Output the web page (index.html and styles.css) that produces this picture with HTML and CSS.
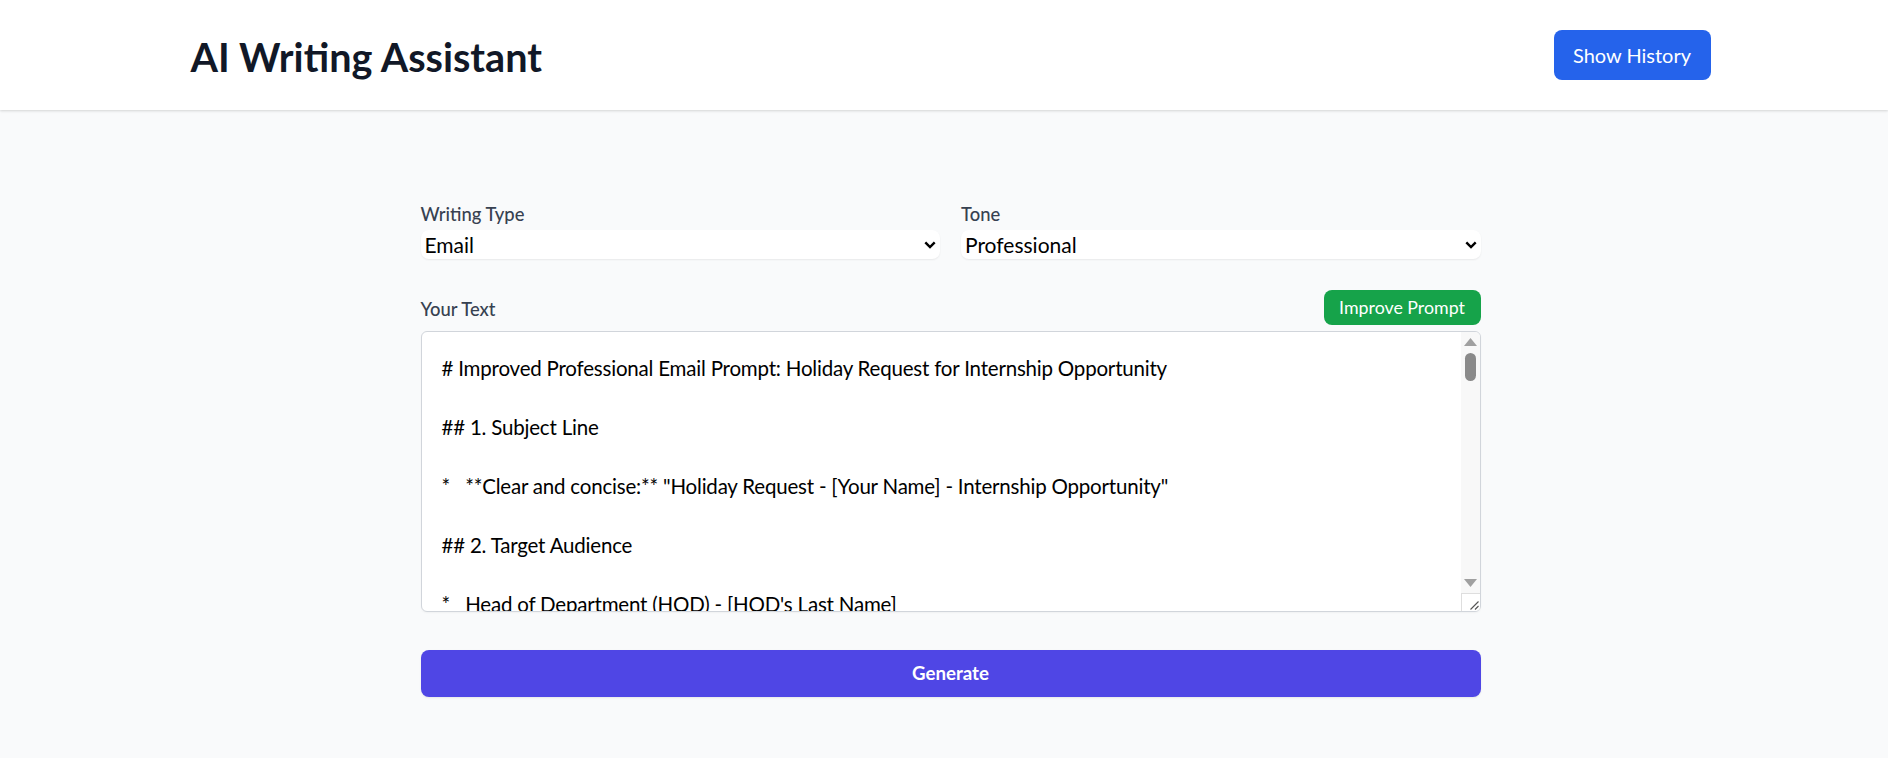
FILE: index.html
```html
<!DOCTYPE html>
<html lang="en">
<head>
<meta charset="utf-8">
<title>AI Writing Assistant</title>
<link rel="stylesheet" href="styles.css">
</head>
<body>
<header class="topbar">
  <div class="topbar-inner">
    <h1 class="app-title">AI Writing Assistant</h1>
    <button class="btn btn-history" type="button">Show History</button>
  </div>
</header>
<main class="main">
  <div class="form">
    <div class="selects">
      <div class="field">
        <label class="field-label" for="type">Writing Type</label>
        <div class="select-wrap">
          <select class="select" id="type">
            <option>Email</option>
            <option>Essay</option>
            <option>Blog Post</option>
          </select>
          <svg class="chevron" viewBox="0 0 12 8" aria-hidden="true"><path d="M1.3 1.4 6 6.1l4.7-4.7"/></svg>
        </div>
      </div>
      <div class="field">
        <label class="field-label" for="tone">Tone</label>
        <div class="select-wrap">
          <select class="select" id="tone">
            <option>Professional</option>
            <option>Casual</option>
            <option>Friendly</option>
          </select>
          <svg class="chevron" viewBox="0 0 12 8" aria-hidden="true"><path d="M1.3 1.4 6 6.1l4.7-4.7"/></svg>
        </div>
      </div>
    </div>
    <div class="text-head">
      <label class="field-label row-label" for="text">Your Text</label>
      <button class="btn btn-improve" type="button">Improve Prompt</button>
    </div>
    <div class="textarea-wrap">
      <textarea class="textarea" id="text"># Improved Professional Email Prompt: Holiday Request for Internship Opportunity

## 1. Subject Line

*   **Clear and concise:** "Holiday Request - [Your Name] - Internship Opportunity"

## 2. Target Audience

*   Head of Department (HOD) - [HOD's Last Name]

## 3. Purpose of the Email

*   Request approval for a short leave of absence to attend an internship opportunity.

## 4. Key Information to Include

*   Your full name, student ID and current year of study.
*   The name of the company offering the internship.
*   The exact dates of the requested leave.
*   The role and responsibilities of the internship.

## 5. Justification

*   Explain how the internship relates to your field of study.
*   Highlight the skills and practical experience you expect to gain.

## 6. Academic Commitments

*   Confirm that you will complete all missed coursework.
*   Provide a plan for catching up on lectures and assignments.

## 7. Tone and Style

*   Polite, respectful and professional throughout.
*   Keep paragraphs short and easy to read.

## 8. Structure

*   Greeting: "Dear [HOD's Title] [HOD's Last Name],"
*   Closing: Thank the HOD for their time and consideration.
*   Sign-off: "Sincerely, [Your Name]"</textarea>
      <div class="scrollbar" aria-hidden="true">
        <div class="sb-btn">
          <svg class="sb-arrow" viewBox="0 0 13 8"><path d="M6.5 0 13 8H0z"/></svg>
        </div>
        <div class="sb-track">
          <div class="sb-thumb"></div>
        </div>
        <div class="sb-btn">
          <svg class="sb-arrow" viewBox="0 0 13 8"><path d="M0 0h13L6.5 8z"/></svg>
        </div>
        <div class="sb-corner">
          <svg class="sb-grip" viewBox="0 0 10 10"><path d="M1.5 9.5 9.5 1.5M6 9.5 9.5 6"/></svg>
        </div>
      </div>
    </div>
    <button class="btn btn-generate" type="button">Generate</button>
  </div>
</main>
</body>
</html>
```
FILE: styles.css
```css
* {
  box-sizing: border-box;
}

html,
body {
  margin: 0;
  padding: 0;
}

body {
  background: #f9fafb;
  font-family: Lato, "Noto Sans", "Liberation Sans", sans-serif;
  color: #111827;
  min-height: 758px;
}

.topbar {
  background: #ffffff;
  box-shadow: 0 1px 3px rgba(0, 0, 0, 0.1), 0 1px 2px rgba(0, 0, 0, 0.06);
  padding-left: 13px;
}

.topbar-inner {
  max-width: 1520px;
  height: 110px;
  margin: 0 auto;
  display: flex;
  align-items: center;
  justify-content: space-between;
}

.app-title {
  margin: 0;
  font-size: 39.6px;
  line-height: 48px;
  font-weight: 700;
  color: #111827;
  padding-top: 3px;
}

.btn {
  border: none;
  cursor: pointer;
  font-family: inherit;
  color: #ffffff;
}

.btn-history {
  background: #2563eb;
  border-radius: 8px;
  height: 50px;
  width: 157px;
  padding: 0;
  font-size: 20px;
}

.main {
  padding: 91px 0 40px 13px;
}

.form {
  max-width: 1060px;
  margin: 0 auto;
}

.selects {
  display: grid;
  grid-template-columns: 1fr 1fr;
  column-gap: 21px;
  margin-bottom: 31px;
}

.field-label {
  display: block;
  font-size: 18.4px;
  line-height: 26.67px;
  font-weight: 500;
  color: #374151;
}

.field .field-label {
  margin-bottom: 2px;
}

.row-label {
  padding-top: 4px;
}

.select-wrap {
  position: relative;
}

.select {
  display: block;
  width: 100%;
  height: 29px;
  appearance: none;
  -webkit-appearance: none;
  border: none;
  border-radius: 8px;
  background: #ffffff;
  box-shadow: 0 1px 2px rgba(0, 0, 0, 0.07);
  padding: 0 24px 0 4px;
  font-family: inherit;
  font-size: 21px;
  color: #000000;
  outline: none;
}

.chevron {
  position: absolute;
  right: 4px;
  top: 11px;
  width: 12px;
  height: 8px;
  fill: none;
  stroke: #000000;
  stroke-width: 2.4;
  pointer-events: none;
}

.text-head {
  display: flex;
  align-items: center;
  justify-content: space-between;
  margin-bottom: 6px;
}

.btn-improve {
  background: #16a34a;
  border-radius: 8px;
  height: 35px;
  width: 157px;
  padding: 0;
  font-size: 17.8px;
}

.textarea-wrap {
  position: relative;
}

.textarea {
  display: block;
  width: 100%;
  height: 281px;
  border: 1px solid #d1d5db;
  border-radius: 6px;
  background: #ffffff;
  padding: 22px 40px 0 20px;
  font-family: inherit;
  font-size: 20.5px;
  letter-spacing: -0.2px;
  line-height: 29.5px;
  color: #000000;
  box-shadow: 0 1px 2px rgba(0, 0, 0, 0.04);
  outline: none;
  resize: none;
  overflow: hidden;
}

.scrollbar {
  position: absolute;
  top: 1px;
  right: 1px;
  bottom: 1px;
  width: 19px;
  display: flex;
  flex-direction: column;
  background: #f8f8f8;
  border-top-right-radius: 5px;
  border-bottom-right-radius: 5px;
  overflow: hidden;
}

.sb-btn {
  height: 20px;
  flex: none;
  display: flex;
  align-items: center;
  justify-content: center;
}

.sb-arrow {
  width: 13px;
  height: 8px;
  fill: #a0a0a0;
}

.sb-track {
  flex: 1;
  padding-top: 1.3px;
}

.sb-thumb {
  width: 11px;
  height: 28px;
  margin-left: 4px;
  border-radius: 6px;
  background: #8a8a8a;
}

.sb-corner {
  height: 18px;
  flex: none;
  background: #ffffff;
  border-top: 1px solid #dedede;
  border-left: 1px solid #dedede;
  display: flex;
  align-items: flex-end;
  justify-content: flex-end;
}

.sb-grip {
  width: 10px;
  height: 10px;
  margin: 0 1px 1px 0;
  fill: none;
  stroke: #555555;
  stroke-width: 1.1;
}

.btn-generate {
  display: block;
  width: 100%;
  height: 47px;
  margin-top: 38px;
  background: #4f46e5;
  border-radius: 8px;
  font-size: 18.67px;
  font-weight: 700;
  box-shadow: 0 1px 2px rgba(0, 0, 0, 0.08);
}
```
